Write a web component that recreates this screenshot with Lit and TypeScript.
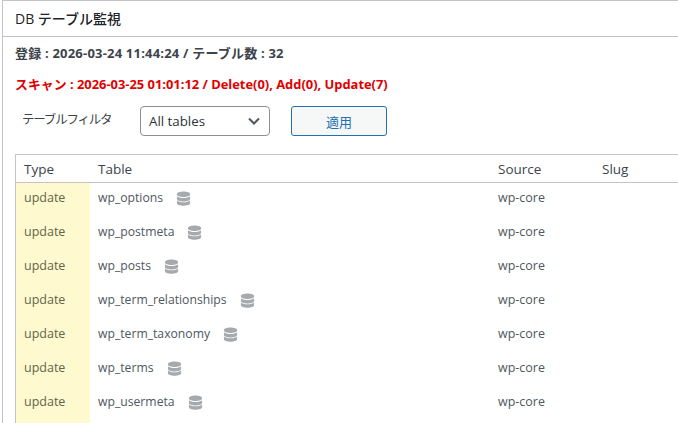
import { LitElement, html, css, svg } from "lit";
import { customElement } from "lit/decorators.js";

const rows = [
  "wp_options",
  "wp_postmeta",
  "wp_posts",
  "wp_term_relationships",
  "wp_term_taxonomy",
  "wp_terms",
  "wp_usermeta",
];

const dbIcon = svg`<svg class="db" viewBox="0 0 16 16" width="15" height="15" aria-hidden="true">
  <path d="M1 3.200C1 1.600 4.200.6 8 .6s7 1 7 2.600v.6c0 1.600-3.200 2.600-7 2.600S1 5.400 1 3.800z"/>
  <path d="M1 5.600c1.200 1.200 4 1.900 7 1.900s5.800-.7 7-1.900v2.900c0 1.600-3.200 2.600-7 2.600s-7-1-7-2.600z"/>
  <path d="M1 10.200c1.200 1.200 4 1.900 7 1.900s5.800-.7 7-1.900v2.800c0 1.600-3.200 2.600-7 2.600s-7-1-7-2.600z"/>
</svg>`;

@customElement("app-root")
export class AppRoot extends LitElement {
  static styles = css`
    :host {
      display: block;
      width: 678px;
      height: 423px;
      overflow: hidden;
      background: #fff;
      font-family: "Open Sans", "Noto Sans CJK JP", sans-serif;
      font-size: 13px;
      color: #3c434a;
    }
    .card {
      width: 900px;
      margin-left: 2px;
      border: 1px solid #c3c4c7;
      background: #fff;
    }
    .title {
      height: 33px;
      padding: 0 0 2px 12px;
      display: flex;
      align-items: center;
      border-bottom: 1px solid #c3c4c7;
      font-size: 14px;
      font-weight: 500;
      color: #1d2327;
    }
    .body {
      padding: 7px 0 0 12px;
    }
    .line {
      margin: 0;
      height: 18px;
      line-height: 18px;
      font-weight: 700;
      font-size: 13px;
      letter-spacing: 0.2px;
    }
    .scan {
      margin-top: 13px;
      font-size: 12.9px;
      letter-spacing: 0;
      color: #e00000;
    }
    .filter {
      display: flex;
      align-items: center;
      margin-top: 13px;
      height: 30px;
    }
    .filter label {
      width: 125px;
      padding-left: 7px;
      box-sizing: border-box;
      margin-top: -5px;
      font-size: 12.5px;
      letter-spacing: -1.2px;
    }
    .select {
      width: 130px;
      height: 30px;
      box-sizing: border-box;
      border: 1px solid #8c8f94;
      border-radius: 4px;
      padding: 0 9px 0 8px;
      display: flex;
      align-items: center;
      justify-content: space-between;
      font-size: 13.3px;
      color: #2c3338;
    }
    .btn {
      margin-left: 21px;
      width: 96px;
      height: 30px;
      box-sizing: border-box;
      border: 1px solid #2271b1;
      border-radius: 3px;
      background: #f6f7f7;
      color: #2271b1;
      font: inherit;
      padding: 0;
    }
    table {
      margin-top: 18px;
      width: 880px;
      table-layout: fixed;
      border-collapse: separate;
      border-spacing: 0;
      border: 1px solid #c3c4c7;
    }
    th {
      height: 27px;
      padding: 0 8px;
      text-align: left;
      font-weight: 400;
      font-size: 13.5px;
      color: #3c434a;
      border-bottom: 1px solid #c3c4c7;
    }
    td {
      height: 34px;
      box-sizing: border-box;
      padding: 5px 8px 0;
      vertical-align: top;
      line-height: 20px;
      font-size: 12.5px;
      color: #50575e;
    }
    td.type {
      background: #fff9cf;
      color: #62664a;
    }
    .tname {
      display: flex;
      align-items: center;
      gap: 13px;
      font-size: 12.2px;
    }
    .db {
      fill: #a7aaad;
      flex: none;
    }
    .chev {
      flex: none;
    }
  `;

  render() {
    return html`
      <div class="card">
        <div class="title">DB テーブル監視</div>
        <div class="body">
          <p class="line">登録 : 2026-03-24 11:44:24 / テーブル数 : 32</p>
          <p class="line scan">スキャン : 2026-03-25 01:01:12 / Delete(0), Add(0), Update(7)</p>
          <div class="filter">
            <label>テーブルフィルタ</label>
            <div class="select">
              <span>All tables</span>
              <svg class="chev" width="12" height="12" viewBox="0 0 12 12" fill="none" stroke="#50575e" stroke-width="2">
                <path d="M1 3.500l5 5 5-5" />
              </svg>
            </div>
            <button class="btn">適用</button>
          </div>
          <table>
            <colgroup>
              <col style="width:74px" />
              <col style="width:400px" />
              <col style="width:104px" />
              <col />
            </colgroup>
            <thead>
              <tr><th>Type</th><th>Table</th><th>Source</th><th>Slug</th></tr>
            </thead>
            <tbody>
              ${rows.map(
                (r) => html`<tr>
                  <td class="type">update</td>
                  <td><div class="tname"><span>${r}</span>${dbIcon}</div></td>
                  <td>wp-core</td>
                  <td></td>
                </tr>`
              )}
              <tr><td class="type"></td><td></td><td></td><td></td></tr>
            </tbody>
          </table>
        </div>
      </div>
    `;
  }
}
